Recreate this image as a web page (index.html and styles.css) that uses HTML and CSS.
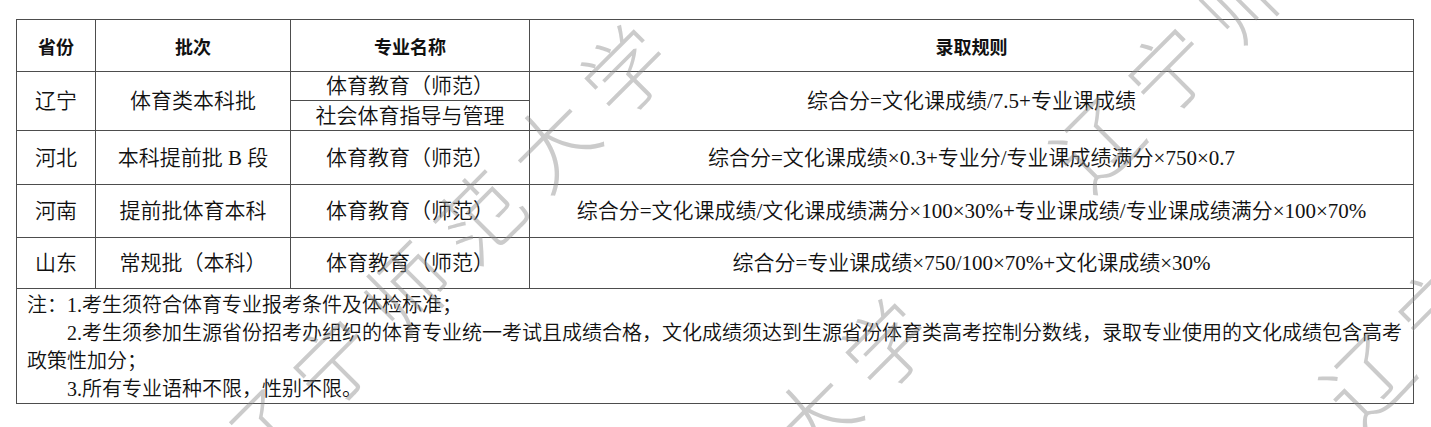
FILE: index.html
```html
<!DOCTYPE html>
<html lang="zh-CN">
<head>
<meta charset="utf-8">
<title>录取规则</title>
<link rel="stylesheet" href="styles.css">
</head>
<body>
<table class="grid">
  <colgroup>
    <col class="c-prov">
    <col class="c-batch">
    <col class="c-major">
    <col class="c-rule">
  </colgroup>
  <thead>
    <tr class="r-head">
      <th>省份</th>
      <th>批次</th>
      <th>专业名称</th>
      <th>录取规则</th>
    </tr>
  </thead>
  <tbody>
    <tr class="r-sub1">
      <td rowspan="2">辽宁</td>
      <td rowspan="2">体育类本科批</td>
      <td>体育教育（师范）</td>
      <td rowspan="2">综合分=文化课成绩/7.5+专业课成绩</td>
    </tr>
    <tr class="r-sub2">
      <td>社会体育指导与管理</td>
    </tr>
    <tr class="r-2">
      <td>河北</td>
      <td>本科提前批 B 段</td>
      <td>体育教育（师范）</td>
      <td>综合分=文化课成绩×0.3+专业分/专业课成绩满分×750×0.7</td>
    </tr>
    <tr class="r-3">
      <td>河南</td>
      <td>提前批体育本科</td>
      <td>体育教育（师范）</td>
      <td>综合分=文化课成绩/文化课成绩满分×100×30%+专业课成绩/专业课成绩满分×100×70%</td>
    </tr>
    <tr class="r-4">
      <td>山东</td>
      <td>常规批（本科）</td>
      <td>体育教育（师范）</td>
      <td>综合分=专业课成绩×750/100×70%+文化课成绩×30%</td>
    </tr>
    <tr class="r-note">
      <td colspan="4" class="note">
        <p>注：1.考生须符合体育专业报考条件及体检标准；</p>
        <p class="indent">2.考生须参加生源省份招考办组织的体育专业统一考试且成绩合格，文化成绩须达到生源省份体育类高考控制分数线，录取专业使用的文化成绩包含高考<br>政策性加分；</p>
        <p class="indent">3.所有专业语种不限，性别不限。</p>
      </td>
    </tr>
  </tbody>
</table>

<div class="watermark" aria-hidden="true">
  <span class="wm wm-a">辽宁师范大学</span>
  <span class="wm wm-b">辽宁师范大学</span>
  <span class="wm wm-c">辽宁师范大学</span>
  <span class="wm wm-d">辽宁师范大学</span>
</div>
</body>
</html>
```

FILE: styles.css
```css
html, body {
  margin: 0;
  padding: 0;
  background: #ffffff;
  overflow: hidden;
}

body {
  position: relative;
  width: 1431px;
  height: 427px;
  font-family: "Liberation Serif", "Noto Sans CJK SC", serif;
  color: #111111;
}

.grid {
  border-collapse: collapse;
  table-layout: fixed;
  width: 1397px;
  margin: 19px 0 0 16px;
}

.c-prov { width: 79px; }
.c-batch { width: 195px; }
.c-major { width: 239px; }
.c-rule { width: 884px; }

.grid th,
.grid td {
  border: 1px solid #4d4d4d;
  padding: 0;
  text-align: center;
  vertical-align: middle;
  white-space: nowrap;
}

.grid th {
  font-family: "Noto Sans CJK SC", sans-serif;
  font-weight: 700;
  font-size: 18px;
  color: #111111;
}

.grid td {
  font-size: 21px;
  font-weight: 350;
  line-height: 24px;
}

.r-head { height: 52px; }
.r-sub1 { height: 29px; }
.r-sub2 { height: 30px; }
.r-2 { height: 54px; }
.r-3 { height: 53px; }
.r-4 { height: 51px; }
.r-note { height: 105px; }

.grid td.note {
  text-align: left;
  vertical-align: top;
  padding: 2px 10px 0 10px;
  font-size: 20px;
  line-height: 28px;
  white-space: normal;
}

.note p {
  margin: 0;
}

.note .indent {
  text-indent: 2em;
}

.watermark {
  position: absolute;
  left: 0;
  top: 0;
  width: 1431px;
  height: 427px;
  overflow: hidden;
  pointer-events: none;
}

.wm {
  position: absolute;
  display: block;
  font-family: "Noto Sans CJK SC", sans-serif;
  font-weight: 300;
  font-size: 84px;
  line-height: 84px;
  letter-spacing: 19px;
  white-space: nowrap;
  color: rgba(140, 140, 140, 0.45);
  transform-origin: 0 50%;
  transform: rotate(-45deg);
}

.wm-a { left: 229px; top: 420px; }
.wm-b { left: 490px; top: 694px; }
.wm-c { left: 1064px; top: 128px; }
.wm-d { left: 1334px; top: 364px; }
```
